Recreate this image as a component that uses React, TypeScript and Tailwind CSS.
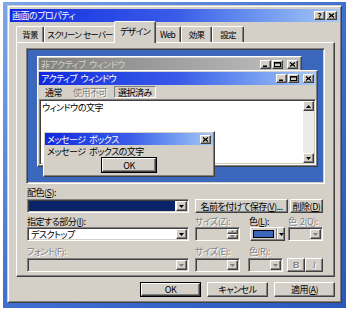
import React from 'react';

const raised = "bg-[#d4d0c8] border border-t-white border-l-white border-r-[#404040] border-b-[#404040] shadow-[inset_-1px_-1px_#808080]";
const sunken = "border border-t-[#808080] border-l-[#808080] border-r-white border-b-white shadow-[inset_1px_1px_#404040,inset_-1px_-1px_#d4d0c8]";
const dis = "text-[#808080] [text-shadow:1px_1px_0_#fff]";

function Tri({ up, color = "#000" }: { up?: boolean; color?: string }) {
  return (
    <svg width="5" height="3" viewBox="0 0 5 3">
      <path d={up ? "M2.5 0L5 3H0z" : "M0 0h5L2.5 3z"} fill={color} />
    </svg>
  );
}

function Combo({ className, inner = "", disabled, children }: { className: string; inner?: string; disabled?: boolean; children?: React.ReactNode }) {
  return (
    <div className={`${sunken} ${disabled ? "bg-[#d4d0c8]" : "bg-white"} h-[14px] flex p-[1px] ${className}`}>
      <div className={`flex-1 flex items-center pl-[2px] ${inner}`}>{children}</div>
      <div className={`${raised} w-[11px] flex items-center justify-center`}>
        <Tri color={disabled ? "#808080" : "#000"} />
      </div>
    </div>
  );
}

function Cap({ kind }: { kind: "min" | "max" | "close" | "help" }) {
  return (
    <div className={`${raised} w-[11px] h-[9px] flex items-center justify-center shrink-0`}>
      {kind === "help" ? (
        <span className="text-[8px] font-bold leading-none text-black tracking-normal">?</span>
      ) : (
        <svg width="7" height="5" viewBox="0 0 7 5">
          {kind === "close" && <path d="M1 0.5l5 4M6 0.5l-5 4" stroke="#000" strokeWidth="1.3" />}
          {kind === "min" && <rect x="1" y="3.5" width="4" height="1.5" fill="#000" />}
          {kind === "max" && (
            <>
              <rect x="0.5" y="0.5" width="6" height="4" fill="none" stroke="#000" />
              <rect x="0" y="0" width="7" height="1.6" fill="#000" />
            </>
          )}
        </svg>
      )}
    </div>
  );
}

function Btn({ className, children }: { className: string; children: React.ReactNode }) {
  return <div className={`${raised} flex items-center justify-center whitespace-nowrap ${className}`}>{children}</div>;
}

export default function App() {
  const tabs = [
    { t: "背景", w: "w-[28px]" },
    { t: "スクリーン セーバー", w: "w-[72px]" },
    { t: "デザイン", w: "w-[36px]", sel: true },
    { t: "Web", w: "w-[27px]" },
    { t: "効果", w: "w-[31px]" },
    { t: "設定", w: "w-[32px]" },
  ];

  return (
    <div className="w-[350px] h-[312px] bg-white pl-[3px] pt-[2px] font-['Noto_Sans_CJK_JP',sans-serif] [font-feature-settings:'palt'] text-[9px] tracking-[-0.5px] [word-spacing:2px] leading-none text-black">
      <div className="w-[343px] h-[306px] bg-gradient-to-br from-[#7ea6e8] via-[#3f6fd0] to-[#2a58bc] pl-[4px] pt-[3px]">
        <div className="w-[335px] h-[298px] bg-[#d4d0c8] border border-t-[#d4d0c8] border-l-[#d4d0c8] border-r-[#404040] border-b-[#404040] shadow-[inset_1px_1px_#fff,inset_-1px_-1px_#808080] px-[2px] pt-[3px] flex flex-col">
          {/* title bar */}
          <div className="h-[13px] bg-gradient-to-r from-[#1226e0] via-[#3a5ae8] to-[#a8c8f4] flex items-center pl-[2px] pr-[2px] text-white">
            <span className="flex-1">画面のプロパティ</span>
            <Cap kind="help" />
            <div className="w-[1px]" />
            <Cap kind="close" />
          </div>

          {/* tabs */}
          <div className="h-[20px] flex items-end pl-[6px]">
            {tabs.map((tab) =>
              tab.sel ? (
                <div
                  key={tab.t}
                  className={`${tab.w} h-[19px] -mx-[2px] px-[2px] box-content relative z-10 -mb-[1px] bg-[#d4d0c8] border border-b-0 border-t-white border-l-white border-r-[#404040] rounded-t-[2px] shadow-[inset_-1px_0_#808080] flex items-center justify-center pb-[2px] whitespace-nowrap tracking-[-0.7px]`}
                >
                  {tab.t}
                </div>
              ) : (
                <div
                  key={tab.t}
                  className={`${tab.w} h-[16px] bg-[#d4d0c8] border border-b-0 border-t-white border-l-white border-r-[#404040] rounded-t-[2px] shadow-[inset_-1px_0_#808080] flex items-center justify-center whitespace-nowrap text-[8.5px] tracking-[-0.8px] [word-spacing:1px]`}
                >
                  {tab.t}
                </div>
              )
            )}
          </div>

          {/* tab panel */}
          <div className="w-[319px] h-[235px] ml-[6px] border border-t-white border-l-white border-r-[#404040] border-b-[#404040] shadow-[inset_-1px_-1px_#808080] pt-[5px]">
            {/* preview */}
            <div className={`${sunken} w-[299px] h-[136px] ml-[9px] p-[1px]`}>
              <div className="relative w-full h-full bg-[#3b68bc] overflow-hidden">
                {/* inactive window */}
                <div className={`${raised} absolute left-[9px] top-[6px] w-[265px] h-[24px] p-[1px]`}>
                  <div className="h-[12px] bg-gradient-to-r from-[#808080] to-[#c0c0c0] flex items-center gap-[1px] pl-[2px] pr-[2px] text-[#d4d0c8]">
                    <span className="flex-1">非アクティブ ウィンドウ</span>
                    <Cap kind="min" />
                    <Cap kind="max" />
                    <div className="w-[2px]" />
                    <Cap kind="close" />
                  </div>
                </div>

                {/* active window */}
                <div className={`${raised} absolute left-[9px] top-[20px] w-[281px] h-[97px] p-[1px] flex flex-col`}>
                  <div className="h-[13px] bg-gradient-to-r from-[#1226e0] via-[#3a5ae8] to-[#a8c8f4] flex items-center gap-[1px] pl-[2px] pr-[2px] text-white">
                    <span className="flex-1">アクティブ ウィンドウ</span>
                    <Cap kind="min" />
                    <Cap kind="max" />
                    <div className="w-[2px]" />
                    <Cap kind="close" />
                  </div>
                  <div className="h-[14px] flex items-center pl-[4px]">
                    <span className="px-[2px]">通常</span>
                    <span className={`px-[5px] ml-[4px] ${dis}`}>使用不可</span>
                    <span className="ml-[2px] h-[12px] px-[3px] flex items-center border border-t-[#808080] border-l-[#808080] border-r-white border-b-white">選択済み</span>
                  </div>
                  <div className={`${sunken} flex-1 p-[1px] flex`}>
                    <div className="flex-1 bg-white pl-[1px] pt-[2px]">ウィンドウの文字</div>
                    <div className="w-[11px] bg-[#eceae6] flex flex-col justify-between">
                      <div className={`${raised} h-[10px] flex items-center justify-center`}><Tri up /></div>
                      <div className={`${raised} h-[10px] flex items-center justify-center`}><Tri /></div>
                    </div>
                  </div>
                </div>

                {/* message box */}
                <div className={`${raised} absolute left-[15px] top-[81px] w-[172px] h-[46px] p-[1px] flex flex-col`}>
                  <div className="h-[12px] bg-gradient-to-r from-[#1226e0] via-[#3a5ae8] to-[#a8c8f4] flex items-center pl-[2px] pr-[2px] text-white">
                    <span className="flex-1">メッセージ ボックス</span>
                    <Cap kind="close" />
                  </div>
                  <div className="h-[12px] flex items-center pl-[2px]">メッセージ ボックスの文字</div>
                  <div className="ml-[56px] w-[56px] h-[16px] border border-black">
                    <Btn className="w-full h-full">OK</Btn>
                  </div>
                </div>
              </div>
            </div>

            {/* form */}
            <div className="pl-[10px]">
              <div className="h-[11px] mt-[3px] flex items-center">配色(<u>S</u>):</div>
              <div className="h-[14px] mt-[1px] flex">
                <Combo className="w-[162px]" inner="bg-[#0a246a] mr-[1px]" />
                <Btn className="w-[93px] h-[14px] ml-[6px]">名前を付けて保存(<u>V</u>)...</Btn>
                <Btn className="w-[33px] h-[14px] ml-[2px]">削除(<u>D</u>)</Btn>
              </div>

              <div className="h-[11px] mt-[3px] flex items-center">
                <span className="w-[168px]">指定する部分(<u>I</u>):</span>
                <span className={`w-[54px] ${dis}`}>サイズ(Z):</span>
                <span className="w-[39px]">色(<u>L</u>):</span>
                <span className={dis}>色 2(Q):</span>
              </div>
              <div className="h-[14px] flex">
                <Combo className="w-[162px]">デスクトップ</Combo>
                <div className={`${sunken} bg-[#d4d0c8] w-[45px] h-[14px] ml-[6px] p-[1px] flex justify-end`}>
                  <div className="w-[11px] flex flex-col">
                    <div className={`${raised} flex-1 flex items-center justify-center`}><Tri up color="#808080" /></div>
                    <div className={`${raised} flex-1 flex items-center justify-center`}><Tri color="#808080" /></div>
                  </div>
                </div>
                <div className={`${raised} w-[35px] h-[14px] ml-[10px] flex items-center pl-[2px]`}>
                  <div className="w-[21px] h-[8px] bg-[#3b68bc] border border-black" />
                  <div className="w-[1px] h-[10px] bg-[#808080] ml-[2px]" />
                  <div className="w-[1px] h-[10px] bg-white" />
                  <div className="flex-1 flex justify-center"><Tri /></div>
                </div>
                <Combo className="w-[35px] ml-[3px]" disabled />
              </div>

              <div className="h-[11px] mt-[5px] flex items-center">
                <span className={`w-[168px] ${dis}`}>フォント(F):</span>
                <span className={`w-[54px] ${dis}`}>サイズ(E):</span>
                <span className={dis}>色(R):</span>
              </div>
              <div className="h-[14px] mt-[1px] flex">
                <Combo className="w-[162px]" disabled />
                <Combo className="w-[45px] ml-[6px]" disabled />
                <Combo className="w-[35px] ml-[8px]" disabled />
                <Btn className={`w-[18px] h-[14px] ml-[4px] font-bold font-['Liberation_Sans',sans-serif] ${dis}`}>B</Btn>
                <Btn className={`w-[18px] h-[14px] italic font-['Liberation_Serif',serif] ${dis}`}>I</Btn>
              </div>
            </div>
          </div>

          {/* dialog buttons */}
          <div className="h-[15px] mt-[5px] flex justify-end gap-[6px] pr-[4px]">
            <div className="w-[61px] h-[15px] border border-black">
              <Btn className="w-full h-full">OK</Btn>
            </div>
            <Btn className="w-[61px] h-[15px]">キャンセル</Btn>
            <Btn className="w-[61px] h-[15px]">適用(<u>A</u>)</Btn>
          </div>
        </div>
      </div>
    </div>
  );
}
